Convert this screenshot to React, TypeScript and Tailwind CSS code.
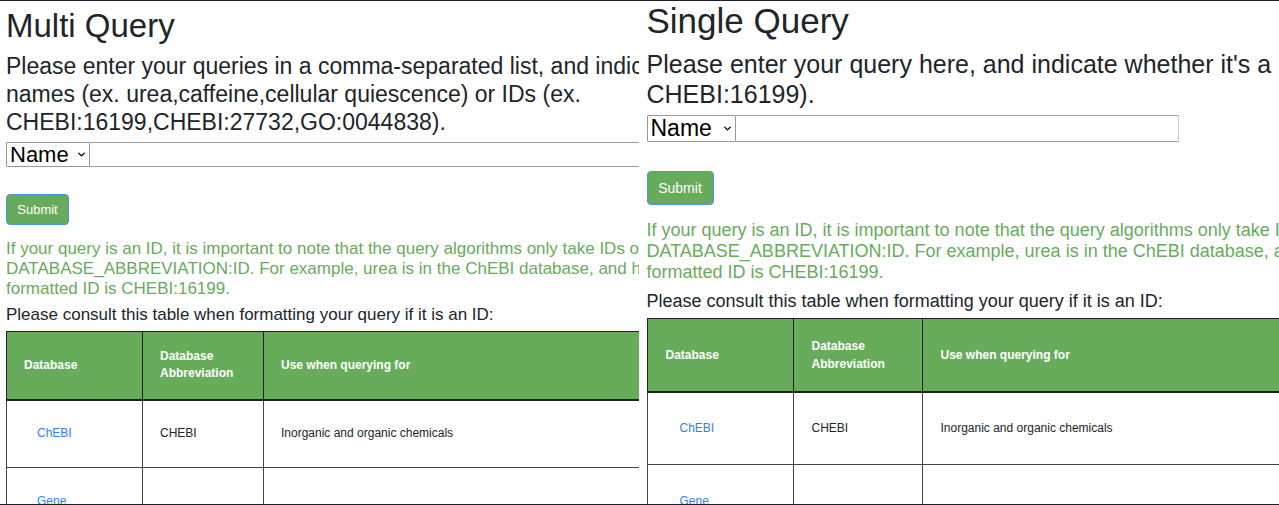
import { ReactNode } from "react";
import { ChevronDown } from "lucide-react";

type Size = "compact" | "regular";

const styles = {
  compact: {
    pane: "pt-[5px]",
    title: "text-[33px] leading-10 mb-[6px]",
    intro: "text-[23px] leading-[28px] mb-[6px]",
    form: "mb-[14px]",
    field: "h-[25px] text-[22px]",
    select: "w-[84px]",
    input: "w-[600px]",
    button: "mt-[27px] h-[31px] w-[63px] text-[13px]",
    note: "text-[17px] leading-5 mb-[6px]",
    hint: "text-[17px] leading-5 mb-[6px]",
    table: "text-[12px] leading-[17px]",
    row: "h-[68px]",
    cell: "px-[17px]",
    link: "ml-[13px]",
    c1: "w-[136px]",
    c2: "w-[121px]",
  },
  regular: {
    pane: "pt-0",
    title: "text-[35px] leading-10 mb-2",
    intro: "text-[25px] leading-[30px] mb-[6px]",
    form: "mb-[15px]",
    field: "h-[27px] text-[23px]",
    select: "w-[89px]",
    input: "w-[443px]",
    button: "mt-[29px] h-[34px] w-[67px] text-[14px]",
    note: "text-[18px] leading-[21px] mb-2",
    hint: "text-[18px] leading-5 mb-[7px]",
    table: "text-[12px] leading-[18px]",
    row: "h-[73px]",
    cell: "px-[18px]",
    link: "ml-[14px]",
    c1: "w-[146px]",
    c2: "w-[129px]",
  },
};

function QueryPane({ id, size, title, intro, note }: { id: string; size: Size; title: string; intro: ReactNode; note: ReactNode }) {
  const s = styles[size];
  return (
    <section className={`min-w-0 flex-1 overflow-hidden ${s.pane}`}>
      <div className="w-max pl-[6px]">
        <h2 className={s.title}>{title}</h2>
        <p className={s.intro}>{intro}</p>
        <form className={s.form} onSubmit={(e) => e.preventDefault()}>
          <div className="flex text-black">
            <div className={`grid ${s.select}`}>
              <select
                id={`${id}-type`}
                aria-label="Query type"
                className={`col-start-1 row-start-1 w-full appearance-none rounded-[1px] border border-[#999] bg-white pl-[3px] leading-none ${s.field}`}
              >
                <option>Name</option>
                <option>ID</option>
              </select>
              <ChevronDown size={11} strokeWidth={3} className="pointer-events-none col-start-1 row-start-1 mr-[3px] self-center justify-self-end" />
            </div>
            <input
              id={`${id}-text`}
              type="text"
              aria-label="Query"
              className={`border border-l-0 border-[#a0a0a0] border-r-[#ccc] bg-white px-1 ${s.field} ${s.input}`}
            />
          </div>
          <button type="submit" className={`block rounded-[4px] border border-[#4a94dc] bg-[#67ac5b] text-white ${s.button}`}>
            Submit
          </button>
        </form>
        <p className={`text-[#67ac5b] ${s.note}`}>{note}</p>
        <p className={s.hint}>Please consult this table when formatting your query if it is an ID:</p>
        <table className={`w-[900px] table-fixed border-collapse border border-[#222] text-left ${s.table}`}>
          <thead>
            <tr className={`bg-[#67ac5b] text-white ${s.row}`}>
              <th className={`border border-b-2 border-[#222] ${s.cell} ${s.c1}`}>Database</th>
              <th className={`border border-b-2 border-[#222] ${s.cell} ${s.c2}`}>Database Abbreviation</th>
              <th className={`border border-b-2 border-[#222] ${s.cell}`}>Use when querying for</th>
            </tr>
          </thead>
          <tbody>
            <tr className={s.row}>
              <td className={`border border-[#444] ${s.cell}`}>
                <a href="#chebi" className={`text-[#3182f6] ${s.link}`}>ChEBI</a>
              </td>
              <td className={`border border-[#444] ${s.cell}`}>CHEBI</td>
              <td className={`border border-[#444] ${s.cell}`}>Inorganic and organic chemicals</td>
            </tr>
            <tr className={s.row}>
              <td className={`border border-[#444] ${s.cell}`}>
                <a href="#gene" className={`text-[#3182f6] ${s.link}`}>Gene</a>
              </td>
              <td className={`border border-[#444] ${s.cell}`} />
              <td className={`border border-[#444] ${s.cell}`} />
            </tr>
          </tbody>
        </table>
      </div>
    </section>
  );
}

export default function App() {
  return (
    <main className="flex h-screen gap-[2px] overflow-hidden border-y border-[#1e1e2e] bg-white font-['Liberation_Sans',Arial,sans-serif] text-[#212529]">
      <QueryPane
        id="multi"
        size="compact"
        title="Multi Query"
        intro={
          <>
            Please enter your queries in a comma-separated list, and indicate
            <br />
            names (ex. urea,caffeine,cellular quiescence) or IDs (ex.
            <br />
            CHEBI:16199,CHEBI:27732,GO:0044838).
          </>
        }
        note={
          <>
            If your query is an ID, it is important to note that the query algorithms only take IDs of the
            <br />
            DATABASE_ABBREVIATION:ID. For example, urea is in the ChEBI database, and has
            <br />
            formatted ID is CHEBI:16199.
          </>
        }
      />
      <QueryPane
        id="single"
        size="regular"
        title="Single Query"
        intro={
          <>
            Please enter your query here, and indicate whether it's a name
            <br />
            CHEBI:16199).
          </>
        }
        note={
          <>
            If your query is an ID, it is important to note that the query algorithms only take IDs
            <br />
            DATABASE_ABBREVIATION:ID. For example, urea is in the ChEBI database, and
            <br />
            formatted ID is CHEBI:16199.
          </>
        }
      />
    </main>
  );
}
